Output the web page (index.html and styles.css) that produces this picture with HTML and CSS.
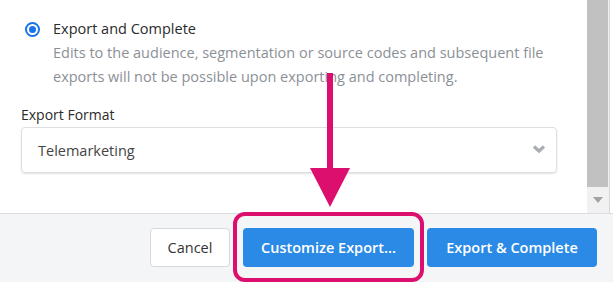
FILE: index.html
```html
<!DOCTYPE html>
<html>
<head>
<meta charset="utf-8">
<link rel="stylesheet" href="styles.css">
</head>
<body>
<div class="page">
  <div class="content">
    <div class="main">
      <div class="option">
        <span class="radio"><span class="dot"></span></span>
        <div class="option-text">
          <div class="option-title">Export and Complete</div>
          <div class="option-desc">Edits to the audience, segmentation or source codes and subsequent file exports will not be possible upon exporting and completing.</div>
        </div>
      </div>
      <div class="field-label">Export Format</div>
      <div class="select">
        <span class="select-value">Telemarketing</span>
        <svg class="chevron" width="14" height="10" viewBox="0 0 14 10"><polyline points="2,2.5 7,7 12,2.5" fill="none" stroke="#a9adb3" stroke-width="3.2" stroke-linejoin="miter"/></svg>
      </div>
    </div>
    <div class="scrollbar">
      <div class="thumb"></div>
      <div class="track">
        <svg width="10" height="6" viewBox="0 0 10 6"><path d="M0 0 L10 0 L5 6 Z" fill="#a3a3a3"/></svg>
      </div>
    </div>
    <div class="edge"></div>
  </div>
  <div class="footer">
    <button class="btn btn-default">Cancel</button>
    <button class="btn btn-primary">Customize Export...</button>
    <button class="btn btn-primary">Export &amp; Complete</button>
  </div>
  <svg class="arrow" width="50" height="140" viewBox="0 0 50 140"><rect x="22" y="3" width="6" height="96" fill="#dc0f6e"/><path d="M5 98 L45 98 L25 137 Z" fill="#dc0f6e"/></svg>
  <div class="highlight"></div>
</div>
</body>
</html>
```

FILE: styles.css
```css
* { box-sizing: border-box; }
html, body { margin: 0; padding: 0; background: #fff; }
body { font-family: "Open Sans", "Noto Sans", sans-serif; }
.page { position: relative; width: 613px; height: 282px; overflow: hidden; display: flex; flex-direction: column; }
.content { display: flex; height: 213px; }
.main { width: 587px; padding: 17px 30px 0 21px; }
.option { display: flex; align-items: flex-start; }
.radio { width: 15px; height: 15px; border-radius: 50%; border: 2px solid #1a73e8; margin: 5px 0 0 4px; display: flex; align-items: center; justify-content: center; flex: none; }
.dot { width: 7px; height: 7px; border-radius: 50%; background: #1a73e8; }
.option-text { margin-left: 13px; }
.option-title { font-size: 14.5px; line-height: 24px; color: #2b2b2b; }
.option-desc { font-size: 14.5px; line-height: 24px; color: #8b9097; }
.field-label { margin-top: 16px; font-size: 14px; line-height: 20px; color: #2b2b2b; }
.select { margin-top: 2px; height: 46px; border: 1px solid #dcdfe3; border-radius: 4px; box-shadow: 0 1px 2px rgba(0,0,0,0.12); display: flex; align-items: center; justify-content: space-between; padding: 0 10px 0 16px; }
.select-value { font-size: 14.5px; color: #444; }
.chevron { margin-top: -2px; }
.scrollbar { width: 22px; background: #f1f1f1; display: flex; flex-direction: column; }
.thumb { height: 187px; background: #c1c1c1; margin-right: 1px; }
.track { flex: 1; display: flex; justify-content: center; padding-top: 10px; }
.edge { flex: 1; border-left: 1px solid #d8d8d8; background: #fff; }
.footer { flex: 1; border-top: 1px solid #dcdde0; background: #f4f5f7; display: flex; justify-content: flex-end; align-items: flex-start; padding: 14px 16px 0 0; }
.btn { height: 39px; border-radius: 4px; font-family: inherit; font-size: 14.5px; padding: 0; cursor: pointer; }
.btn-default { width: 80px; background: #fff; border: 1px solid #d6d8db; color: #333; margin-right: 13px; }
.btn-primary { background: #2a8ae6; border: none; color: #fff; font-weight: 600; }
.btn-primary:nth-child(2) { width: 171px; margin-right: 13px; }
.btn-primary:nth-child(3) { width: 170px; }
.arrow { position: absolute; left: 305px; top: 70px; }
.highlight { position: absolute; left: 233px; top: 212px; width: 191px; height: 70px; border: 4px solid #dc0f6e; border-radius: 12px; }
```
